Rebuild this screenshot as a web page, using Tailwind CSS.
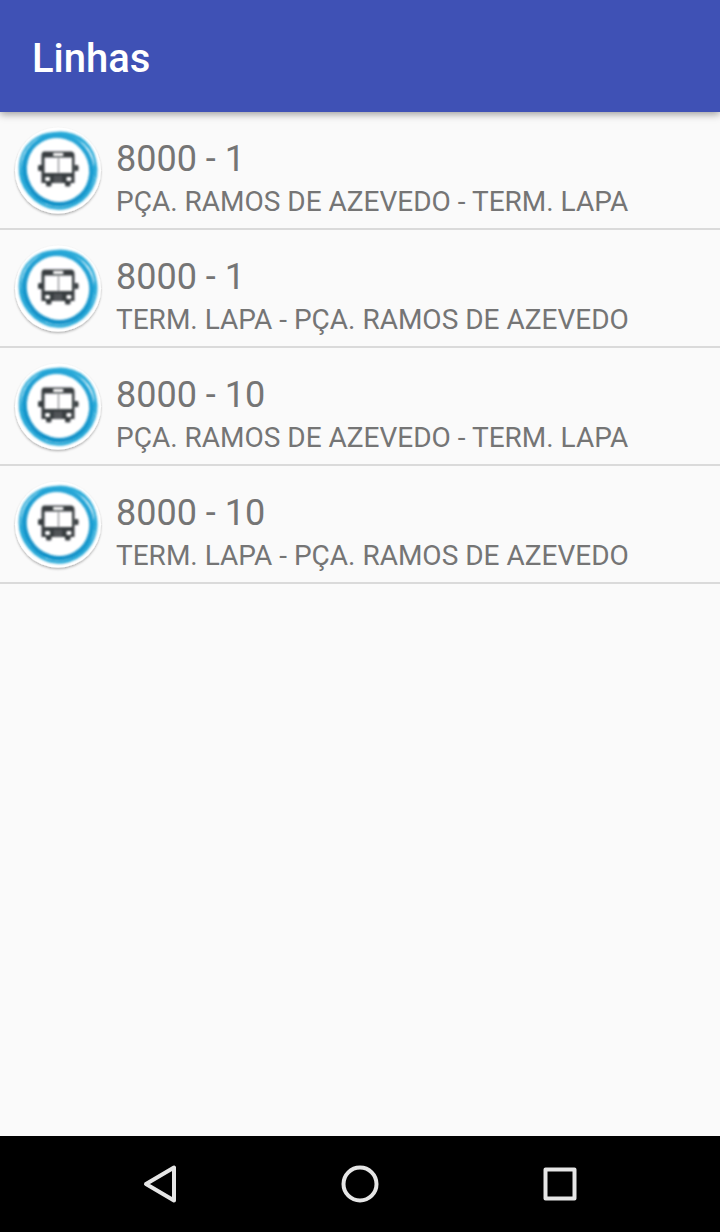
<!DOCTYPE html>
<html lang="pt-BR">
<head>
<meta charset="utf-8">
<meta name="viewport" content="width=device-width, initial-scale=1">
<title>Linhas</title>
<script src="https://cdn.jsdelivr.net/npm/@tailwindcss/browser@4"></script>
</head>
<body class="flex min-h-screen flex-col bg-[#fafafa] font-['Roboto',sans-serif] text-[#757575]">

<svg class="absolute size-0" aria-hidden="true">
  <defs>
    <linearGradient id="ring" x1="0" y1="0" x2="1" y2="1">
      <stop offset="0" stop-color="#2aa9d9"/>
      <stop offset="1" stop-color="#0d8cc4"/>
    </linearGradient>
    <filter id="shade" x="-20%" y="-20%" width="140%" height="140%">
      <feDropShadow dx="0" dy="1.5" stdDeviation="1.3" flood-color="#000" flood-opacity=".3"/>
    </filter>
    <filter id="soft" x="-10%" y="-10%" width="120%" height="120%"><feGaussianBlur stdDeviation=".8"/></filter>
    <symbol id="bus" viewBox="0 0 104 104">
      <circle cx="50" cy="50.500" r="43" fill="#fff" filter="url(#shade)"/>
      <g filter="url(#soft)">
        <g fill="none">
          <ellipse cx="52" cy="51.500" rx="37.500" ry="36" transform="rotate(-60 52 51.500)" stroke="#2aabd9" stroke-width="2"/>
          <ellipse cx="48.500" cy="50.500" rx="38" ry="36" transform="rotate(50 48.500 50.500)" stroke="#2aabd9" stroke-width="2"/>
          <ellipse cx="50.500" cy="48.500" rx="37.500" ry="35" transform="rotate(-35 50.500 48.500)" stroke="#2aabd9" stroke-width="2.200"/>
          <ellipse cx="50" cy="50" rx="34.500" ry="33" transform="rotate(60 50 50)" stroke="url(#ring)" stroke-width="4.400"/>
        </g>
        <path fill="#373c41" fill-rule="evenodd" d="M35.500 31.500H63.500Q66.300 32 66.500 35V63H62.500V65Q62.500 66.500 61 66.500H58.500Q57 66.500 57 65V63H43.500V65Q43.500 66.500 42 66.500H39.500Q38 66.500 38 65V63H33.500V35Q33.500 32 35.500 31.500ZM45.500 33Q44.500 34.500 45.500 36H55Q56 34.500 55 33ZM36.500 37.500V53H64V37.500ZM37.500 57Q36.500 59 37.500 61H41.500Q43 59 41.500 57ZM59 57Q57.500 59 59 61H63Q64 59 63 57Z"/>
        <path fill="#373c41" d="M34.500 45H31.500Q30 45 30 46.500V49.500Q30 51 31.500 51H34.500ZM66.500 45H69Q70.500 45 70.500 46.500V49.500Q70.500 51 69 51H66.500Z"/>
        <path stroke="#8b8e91" stroke-width="1.300" d="M50.500 37.500V53"/>
        <path stroke="#7d8082" stroke-width=".8" d="M46 57H54M46 59.200H54M46 61.400H54"/>
      </g>
    </symbol>
  </defs>
</svg>

<header class="relative z-10 flex h-28 items-center bg-[#3f51b5] px-8 pt-1.5 shadow-[0_2px_8px_rgba(0,0,0,0.4)]">
  <h1 class="text-[40px] leading-12 font-medium text-white">Linhas</h1>
</header>

<main class="flex-1">
  <ul>
    <li class="flex gap-1 border-b-2 border-[#dadada] pt-2 pb-1 pl-2">
      <svg class="size-26 shrink-0" aria-hidden="true"><use href="#bus"/></svg>
      <div class="pt-4"><h2 class="text-4xl leading-[46px]">8000 - 1</h2><p class="text-[28px] leading-10">PÇA. RAMOS DE AZEVEDO - TERM. LAPA</p></div>
    </li>
    <li class="flex gap-1 border-b-2 border-[#dadada] pt-2 pb-1 pl-2">
      <svg class="size-26 shrink-0" aria-hidden="true"><use href="#bus"/></svg>
      <div class="pt-4"><h2 class="text-4xl leading-[46px]">8000 - 1</h2><p class="text-[28px] leading-10">TERM. LAPA - PÇA. RAMOS DE AZEVEDO</p></div>
    </li>
    <li class="flex gap-1 border-b-2 border-[#dadada] pt-2 pb-1 pl-2">
      <svg class="size-26 shrink-0" aria-hidden="true"><use href="#bus"/></svg>
      <div class="pt-4"><h2 class="text-4xl leading-[46px]">8000 - 10</h2><p class="text-[28px] leading-10">PÇA. RAMOS DE AZEVEDO - TERM. LAPA</p></div>
    </li>
    <li class="flex gap-1 border-b-2 border-[#dadada] pt-2 pb-1 pl-2">
      <svg class="size-26 shrink-0" aria-hidden="true"><use href="#bus"/></svg>
      <div class="pt-4"><h2 class="text-4xl leading-[46px]">8000 - 10</h2><p class="text-[28px] leading-10">TERM. LAPA - PÇA. RAMOS DE AZEVEDO</p></div>
    </li>
  </ul>
</main>

<nav class="grid h-24 grid-cols-3 bg-black px-15" aria-label="Navegação do sistema">
  <button type="button" aria-label="Voltar" class="flex items-center justify-center">
    <svg class="size-10" viewBox="0 0 40 40" fill="none" stroke="#e6e6e6" stroke-width="4" stroke-linejoin="round"><path d="M34 3.500V36.500L6 20Z"/></svg>
  </button>
  <button type="button" aria-label="Início" class="flex items-center justify-center">
    <svg class="size-10" viewBox="0 0 40 40" fill="none" stroke="#e6e6e6" stroke-width="4"><circle cx="20" cy="20" r="16.500"/></svg>
  </button>
  <button type="button" aria-label="Recentes" class="flex items-center justify-center">
    <svg class="size-10" viewBox="0 0 40 40" fill="none" stroke="#e6e6e6" stroke-width="4" stroke-linejoin="round"><path d="M5.500 5.500H34.500V34.500H5.500Z"/></svg>
  </button>
</nav>
</body>
</html>
